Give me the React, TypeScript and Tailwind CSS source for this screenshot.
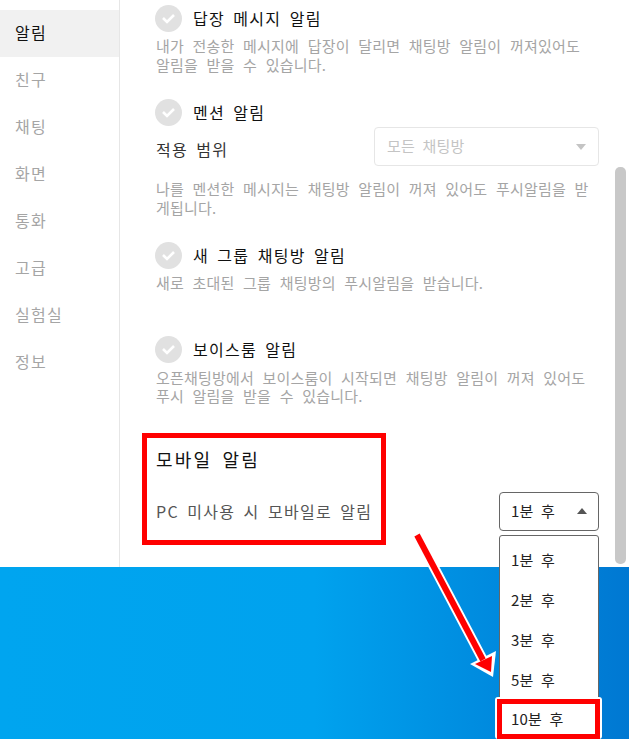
import React from "react";

const NAV = ["알림", "친구", "채팅", "화면", "통화", "고급", "실험실", "정보"];
const OPTIONS = ["1분 후", "2분 후", "3분 후", "5분 후"];

const CheckTitle = ({ title }: { title: string }) => (
  <div className="flex h-[27px] items-center gap-[11px]">
    <span className="flex h-[27px] w-[27px] shrink-0 items-center justify-center rounded-full bg-[#e1e1e1]">
      <svg width="15" height="11" viewBox="0 0 15 11" fill="none">
        <path d="M2 5l4 4 7-7" stroke="#ffffff" strokeWidth="2.6" />
      </svg>
    </span>
    <span className="text-[16px] leading-[27px] tracking-[1.28px] [word-spacing:3.5px] text-[#111]">{title}</span>
  </div>
);

const Desc = ({ children }: { children: React.ReactNode }) => (
  <p className="pl-px text-[15px] leading-[18.5px] tracking-[0.2px] [word-spacing:5px] text-[#a5a5a5]">{children}</p>
);

export default function App() {
  return (
    <div className="relative h-[739px] w-[629px] overflow-hidden bg-white font-['Noto_Sans_CJK_KR','Liberation_Sans',sans-serif]">
      <div className="flex h-[567px]">
        <nav className="w-[120px] shrink-0 border-r border-[#e6e6e6] pt-[10px]">
          {NAV.map((item, i) => (
            <div
              key={item}
              className={`flex h-[47px] items-center pb-[4px] pl-[15px] text-[16px] tracking-[1.28px] ${
                i === 0 ? "bg-[#f1f1f1] text-[#111]" : "text-[#a5a5a5]"
              }`}
            >
              {item}
            </div>
          ))}
        </nav>

        <main className="relative w-[479px] pl-[35px] pt-[5px]">
          <CheckTitle title="답장 메시지 알림" />
          <div className="mt-[5px] w-[445px]">
            <Desc>
              내가 전송한 메시지에 답장이 달리면 채팅방 알림이 꺼져있어도
              <br />
              알림을 받을 수 있습니다.
            </Desc>
          </div>

          <div className="mt-[25px]">
            <CheckTitle title="멘션 알림" />
          </div>
          <div className="flex h-[40px] items-end justify-between">
            <span className="self-start pl-px pt-[11px] text-[16px] tracking-[1.28px] [word-spacing:3.5px] text-[#333]">적용 범위</span>
            <div className="flex h-[39px] w-[225px] items-center justify-between rounded-[4px] border border-[#e6e6e6] px-[12px] text-[15px] tracking-[0.2px] [word-spacing:4px] text-[#c4c4c4]">
              모든 채팅방
              <span className="h-0 w-0 border-x-[5px] border-t-[6px] border-x-transparent border-t-[#c4c4c4]" />
            </div>
          </div>
          <div className="mt-[14px]">
            <Desc>
              나를 멘션한 메시지는 채팅방 알림이 꺼져 있어도 푸시알림을 받
              <br />
              게됩니다.
            </Desc>
          </div>

          <div className="mt-[25px]">
            <CheckTitle title="새 그룹 채팅방 알림" />
          </div>
          <div className="mt-[5px]">
            <Desc>새로 초대된 그룹 채팅방의 푸시알림을 받습니다.</Desc>
          </div>

          <div className="mt-[43px]">
            <CheckTitle title="보이스룸 알림" />
          </div>
          <div className="mt-[6px]">
            <Desc>
              오픈채팅방에서 보이스룸이 시작되면 채팅방 알림이 꺼져 있어도
              <br />
              푸시 알림을 받을 수 있습니다.
            </Desc>
          </div>

          <h2 className="mt-[40px] pl-px text-[18px] font-normal leading-[26px] tracking-[2.2px] [word-spacing:4px] text-[#111]">모바일 알림</h2>
          <div className="mt-[20px] flex h-[39px] items-center justify-between">
            <span className="pl-px text-[16px] tracking-[1.28px] [word-spacing:3.5px] text-[#555]">PC 미사용 시 모바일로 알림</span>
            <div className="flex h-[39px] w-[100px] items-center justify-between rounded-[4px] border border-[#666] px-[11px] text-[15px] tracking-[0.2px] [word-spacing:4px] text-[#222]">
              1분 후
              <span className="h-0 w-0 border-x-[5px] border-b-[6px] border-x-transparent border-b-[#555]" />
            </div>
          </div>
        </main>

        <div className="ml-[16px] mt-[167px] h-[397px] w-[11px] rounded-[5px] bg-[#c8c8c8]" />
      </div>

      <div className="h-[172px] bg-gradient-to-r from-[#00a5ef] via-[#00a2ee] via-50% to-[#0078d2]" />

      {/* dropdown list */}
      <div className="absolute left-[499px] top-[535px] h-[204px] w-[100px] rounded-t-[3px] border border-[#666] bg-white pt-[4px] text-[15px] tracking-[0.2px] [word-spacing:4px] text-[#222]">
        {OPTIONS.map((opt) => (
          <div key={opt} className="flex h-[40px] items-center pl-[11px]">
            {opt}
          </div>
        ))}
      </div>

      {/* annotations */}
      <div className="absolute left-[142px] top-[433px] h-[112px] w-[244px] border-[5px] border-[#ff0000]" />
      <div className="absolute left-[495px] top-[697px] h-[42px] w-[107px] rounded-[3px] bg-white p-[2px]">
        <div className="flex h-[40px] items-center border-[5px] border-[#ff0000] pl-[9px] text-[15px] tracking-[0.2px] [word-spacing:4px] text-[#222]">
          10분 후
        </div>
      </div>
      <svg className="absolute left-[400px] top-[525px]" width="110" height="160" viewBox="0 0 110 160">
        <path d="M17 10L83 135" stroke="#ffffff" strokeWidth="10" fill="none" />
        <path d="M70 139L96 126L93 152Z" fill="#ffffff" />
        <path d="M17 10L83 135" stroke="#ff0000" strokeWidth="6" fill="none" />
        <path d="M75 139L92 131L91 147Z" fill="#ff0000" />
      </svg>
    </div>
  );
}
